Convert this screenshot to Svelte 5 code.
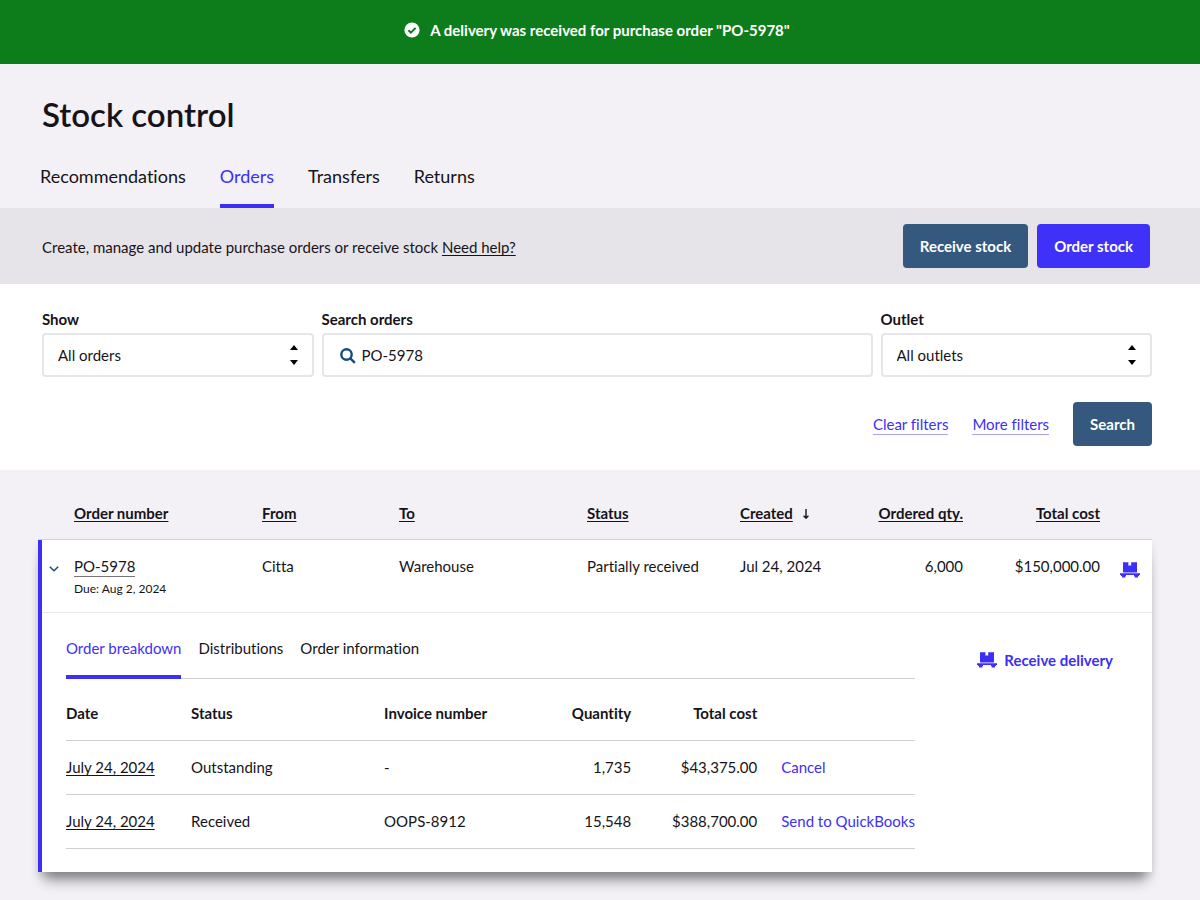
<script lang="ts">
  const tabs = ['Recommendations', 'Orders', 'Transfers', 'Returns'];
  const detailTabs = ['Order breakdown', 'Distributions', 'Order information'];

  const deliveries = [
    { date: 'July 24, 2024', status: 'Outstanding', invoice: '-', quantity: '1,735', total: '$43,375.00', action: 'Cancel' },
    { date: 'July 24, 2024', status: 'Received', invoice: 'OOPS-8912', quantity: '15,548', total: '$388,700.00', action: 'Send to QuickBooks' },
  ];

  let activeTab = $state('Orders');
  let activeDetail = $state('Order breakdown');
  let show = $state('All orders');
  let outlet = $state('All outlets');
  let query = $state('PO-5978');
  let expanded = $state(true);

  function clearFilters() {
    show = 'All orders';
    outlet = 'All outlets';
    query = '';
  }
</script>

{#snippet pallet()}
  <svg class="pallet" viewBox="0 0 20 16" width="20" height="16" aria-hidden="true">
    <path d="M3 .2h5.4v3.6l1.4-.6 1.4.6V.2H17v10.4H3z" />
    <path d="M0 11.2h20V13h-1v1h-1v1.5h-3.4V14H14v-1H6v1h-.6v1.5H2V14H1v-1H0z" />
  </svg>
{/snippet}

{#snippet sorter()}
  <svg class="sorter" viewBox="0 0 8 20" width="8" height="20" aria-hidden="true">
    <path d="M4 0l4 5H0zM4 20l4-5H0z" />
  </svg>
{/snippet}

<div class="banner" role="status">
  <svg viewBox="0 0 16 16" width="16" height="16" aria-hidden="true">
    <circle cx="8" cy="8" r="7.6" fill="#fff" />
    <path d="M4.4 8.2l2.5 2.4 4.7-4.7" fill="none" stroke="#0d7d1c" stroke-width="2" />
  </svg>
  <span>A delivery was received for purchase order "PO-5978"</span>
</div>

<header>
  <h1>Stock control</h1>
  <nav class="tabs">
    {#each tabs as tab}
      <button class:active={activeTab === tab} onclick={() => (activeTab = tab)}>{tab}</button>
    {/each}
  </nav>
</header>

<section class="action-bar">
  <p>Create, manage and update purchase orders or receive stock <a href="#help">Need help?</a></p>
  <div class="buttons">
    <button class="btn">Receive stock</button>
    <button class="btn primary">Order stock</button>
  </div>
</section>

<form class="filters" onsubmit={(e) => e.preventDefault()}>
  <div class="fields">
    <div class="field">
      <label for="show">Show</label>
      <div class="control">
        <select id="show" bind:value={show}>
          <option>All orders</option>
          <option>Open orders</option>
        </select>
        {@render sorter()}
      </div>
    </div>
    <div class="field wide">
      <label for="search">Search orders</label>
      <div class="control">
        <svg class="magnifier" viewBox="0 0 16 16" width="16" height="16" aria-hidden="true">
          <circle cx="6.5" cy="6.5" r="5.2" />
          <path d="M10.4 10.4l4.4 4.4" />
        </svg>
        <input id="search" type="text" bind:value={query} />
      </div>
    </div>
    <div class="field">
      <label for="outlet">Outlet</label>
      <div class="control">
        <select id="outlet" bind:value={outlet}>
          <option>All outlets</option>
          <option>Warehouse</option>
        </select>
        {@render sorter()}
      </div>
    </div>
  </div>
  <div class="filter-actions">
    <button type="button" class="link" onclick={clearFilters}>Clear filters</button>
    <button type="button" class="link">More filters</button>
    <button type="submit" class="btn">Search</button>
  </div>
</form>

<main>
  <table class="orders">
    <colgroup>
      <col class="c-toggle" /><col class="c-order" /><col class="c-from" /><col class="c-to" /><col class="c-status" />
      <col class="c-created" /><col class="c-qty" /><col class="c-cost" /><col class="c-icon" />
    </colgroup>
    <thead>
      <tr>
        <th></th>
        <th><button>Order number</button></th>
        <th><button>From</button></th>
        <th><button>To</button></th>
        <th><button>Status</button></th>
        <th>
          <button>Created</button>
          <svg class="arrow" viewBox="0 0 8 10" width="8" height="10" aria-hidden="true"><path d="M4 0v9M1.6 6.8L4 9.2l2.4-2.4" /></svg>
        </th>
        <th class="num"><button>Ordered qty.</button></th>
        <th class="num"><button>Total cost</button></th>
        <th></th>
      </tr>
    </thead>
    <tbody>
      <tr class="order">
        <td class="toggle">
          <button aria-label="Toggle order" aria-expanded={expanded} onclick={() => (expanded = !expanded)}>
            <svg viewBox="0 0 10 6" width="10" height="6" aria-hidden="true"><path d="M.8.8L5 4.8 9.2.8" /></svg>
          </button>
        </td>
        <td>
          <a class="number" href="#order">PO-5978</a>
          <div class="due">Due: Aug 2, 2024</div>
        </td>
        <td>Citta</td>
        <td>Warehouse</td>
        <td>Partially received</td>
        <td>Jul 24, 2024</td>
        <td class="num">6,000</td>
        <td class="num">$150,000.00</td>
        <td class="receive"><button aria-label="Receive delivery">{@render pallet()}</button></td>
      </tr>
      {#if expanded}
        <tr>
          <td class="detail" colspan="9">
            <div class="detail-layout">
              <div class="breakdown">
                <div class="detail-tabs">
                  {#each detailTabs as tab}
                    <button class:active={activeDetail === tab} onclick={() => (activeDetail = tab)}>{tab}</button>
                  {/each}
                </div>
                <table class="deliveries">
                  <colgroup>
                    <col class="d-date" /><col class="d-status" /><col class="d-invoice" />
                    <col class="d-qty" /><col class="d-total" /><col class="d-action" />
                  </colgroup>
                  <thead>
                    <tr>
                      <th>Date</th>
                      <th>Status</th>
                      <th>Invoice number</th>
                      <th class="num">Quantity</th>
                      <th class="num">Total cost</th>
                      <th></th>
                    </tr>
                  </thead>
                  <tbody>
                    {#each deliveries as d}
                      <tr>
                        <td><a href="#delivery">{d.date}</a></td>
                        <td>{d.status}</td>
                        <td>{d.invoice}</td>
                        <td class="num">{d.quantity}</td>
                        <td class="num">{d.total}</td>
                        <td class="action"><button>{d.action}</button></td>
                      </tr>
                    {/each}
                  </tbody>
                </table>
              </div>
              <button class="receive-delivery">{@render pallet()}Receive delivery</button>
            </div>
          </td>
        </tr>
      {/if}
    </tbody>
  </table>
</main>

<style>
  :global(body) {
    margin: 0;
    background: #f3f1f5;
    color: #16141a;
    font: 15px/20px Lato, sans-serif;
    font-variant-ligatures: none;
  }
  button,
  input,
  select {
    font: inherit;
    font-variant-ligatures: none;
    color: inherit;
    margin: 0;
    padding: 0;
    border: 0;
    background: none;
  }
  button {
    cursor: pointer;
    white-space: nowrap;
  }
  a {
    color: inherit;
    text-underline-offset: 2px;
    text-decoration-skip-ink: none;
  }
  svg {
    flex: none;
  }

  .banner {
    display: flex;
    justify-content: center;
    align-items: center;
    gap: 10px;
    height: 64px;
    padding: 0 6px 4px 0;
    box-sizing: border-box;
    background: #0d7d1c;
    color: #fff;
    font-weight: 700;
  }

  header {
    padding: 28px 40px 0;
  }
  h1 {
    margin: 0 0 24px 2px;
    font-size: 33px;
    line-height: 44px;
    font-weight: 600;
  }
  .tabs {
    display: flex;
    gap: 34px;
  }
  .tabs button {
    height: 48px;
    padding-bottom: 12px;
    font-size: 18px;
    line-height: 24px;
    border-bottom: 4px solid transparent;
  }
  .tabs .active,
  .detail-tabs .active {
    color: #3d2ff5;
    border-color: #3d2ff5;
  }

  .action-bar {
    display: flex;
    justify-content: space-between;
    align-items: center;
    padding: 16px 50px 16px 42px;
    background: #e6e4e8;
  }
  .action-bar p {
    margin: 2px 0 0;
  }
  .buttons {
    display: flex;
    gap: 9px;
  }
  .btn {
    height: 44px;
    padding: 0 17px;
    border-radius: 4px;
    background: #34587e;
    color: #fff;
    font-weight: 700;
  }
  .btn.primary {
    background: #3f31f7;
  }

  .filters {
    padding: 25px 48px 24px 42px;
    background: #fff;
  }
  .fields {
    display: grid;
    grid-template-columns: repeat(4, 1fr);
    gap: 8px;
  }
  .wide {
    grid-column: span 2;
  }
  .field label {
    display: block;
    margin-bottom: 4px;
    font-weight: 700;
  }
  .control {
    position: relative;
  }
  .control input,
  .control select {
    width: 100%;
    height: 44px;
    padding: 0 14px;
    box-sizing: border-box;
    border: 2px solid #e6e5e7;
    border-radius: 4px;
    background: #fff;
    appearance: none;
  }
  .control input {
    padding-left: 38px;
  }
  .sorter {
    position: absolute;
    right: 16px;
    top: 12px;
    pointer-events: none;
  }
  .magnifier {
    position: absolute;
    left: 18px;
    top: 15px;
    fill: none;
    stroke: #174a7e;
    stroke-width: 2.4;
  }
  .filter-actions {
    display: flex;
    justify-content: flex-end;
    align-items: center;
    gap: 24px;
    margin-top: 25px;
  }
  .link {
    color: #3d2ff5;
    border-bottom: 1px solid #a9a3fa;
  }

  main {
    padding: 0 48px 28px 38px;
  }
  table {
    width: 100%;
    table-layout: fixed;
    border-spacing: 0;
  }
  th,
  td {
    padding: 0;
    text-align: left;
    vertical-align: top;
    white-space: nowrap;
  }
  th {
    font-weight: 700;
  }
  .num {
    text-align: right;
  }
  .c-toggle { width: 36px; }
  .c-order { width: 188px; }
  .c-from { width: 137px; }
  .c-to { width: 188px; }
  .c-status { width: 153px; }
  .c-created { width: 123px; }
  .c-qty { width: 100px; }
  .c-cost { width: 137px; }
  .c-icon { width: 52px; }

  .orders > thead th {
    height: 36px;
    padding-top: 33px;
    border-bottom: 1px solid #d6d5d8;
  }
  .orders > thead button {
    font-weight: 700;
    text-decoration: underline;
    text-decoration-skip-ink: none;
    text-underline-offset: 2px;
  }
  .arrow {
    margin-left: 5px;
    fill: none;
    stroke: #16141a;
    stroke-width: 1.4;
  }
  .orders > tbody {
    background: #fff;
    box-shadow: 0 14px 12px -6px rgba(0, 0, 0, 0.42), 0 4px 8px rgba(0, 0, 0, 0.1);
  }
  .order {
    height: 73px;
  }
  .order td {
    padding-top: 16px;
    box-shadow: inset 0 -1px #e8e8ea;
  }
  .order .toggle {
    border-left: 4px solid #3d2ff5;
    padding-left: 7px;
  }
  .toggle svg {
    display: block;
    margin-top: 8px;
  }
  .toggle path {
    fill: none;
    stroke: #1b4a80;
    stroke-width: 1.5;
  }
  .number {
    display: inline-block;
    text-decoration: none;
    border-bottom: 1px solid #77757a;
  }
  .due {
    margin-top: 4px;
    font-size: 12px;
    line-height: 16px;
  }
  .order .receive {
    padding: 22px 0 0 20px;
  }
  .pallet {
    display: block;
    fill: #3d2ff5;
  }

  .detail {
    border-left: 4px solid #3d2ff5;
  }
  .detail-layout {
    display: grid;
    grid-template-columns: 1fr auto;
    gap: 62px;
    align-items: start;
    padding: 25px 39px 23px 24px;
  }
  .detail-tabs {
    display: flex;
    gap: 17px;
    border-bottom: 1px solid #cfced1;
  }
  .detail-tabs button {
    height: 41px;
    margin-bottom: -1px;
    padding-bottom: 17px;
    border-bottom: 4px solid transparent;
  }
  .detail-tabs .active {
    border-color: #3d2ff5;
  }
  .d-date { width: 125px; }
  .d-status { width: 193px; }
  .d-invoice { width: 162px; }
  .d-qty { width: 85px; }
  .d-total { width: 126px; }
  .d-action { width: 158px; }

  .deliveries th {
    height: 37px;
    padding-top: 24px;
    border-bottom: 1px solid #cfced1;
  }
  .deliveries td {
    height: 37px;
    padding-top: 16px;
    border-bottom: 1px solid #cfced1;
  }
  .deliveries .action {
    padding-left: 24px;
  }
  .action button {
    color: #3d2ff5;
  }
  .receive-delivery {
    display: flex;
    align-items: center;
    gap: 7px;
    margin-top: 12px;
    color: #3d2ff5;
    font-weight: 700;
  }
</style>
